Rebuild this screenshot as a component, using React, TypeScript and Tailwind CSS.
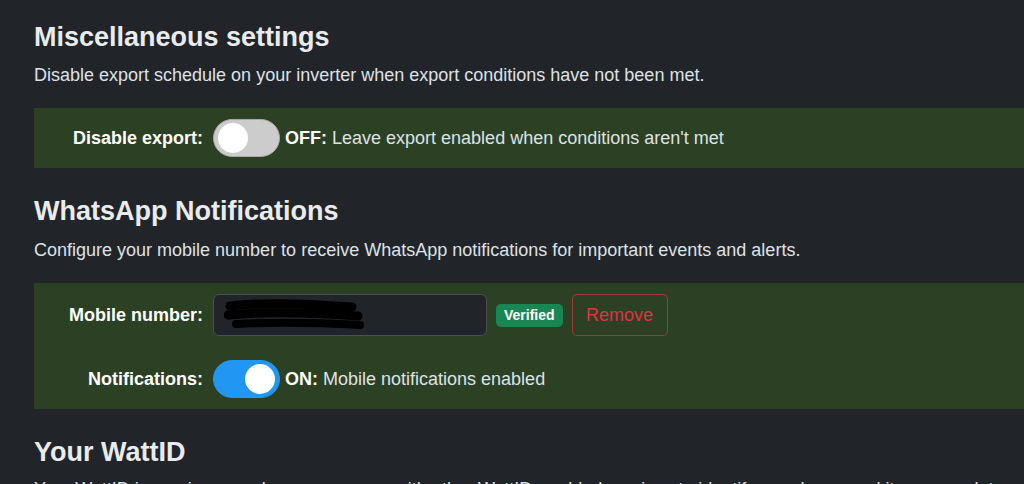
import React from 'react';

const Toggle = ({ on }: { on: boolean }) => (
  <span
    className={`relative inline-flex h-[38px] w-[67px] shrink-0 items-center rounded-full border ${
      on ? 'bg-[#2196f3] border-[#2196f3] justify-end' : 'bg-[#cccccc] border-[#a9a9a9] justify-start'
    } px-[4px]`}
  >
    <span className="block h-[30px] w-[30px] rounded-full bg-white" />
  </span>
);

const Label = ({ children }: { children: React.ReactNode }) => (
  <div className="w-[169px] shrink-0 text-right text-[18px] font-bold text-white">{children}</div>
);

export default function App() {
  return (
    <div className="min-h-screen overflow-hidden bg-[#212529] pl-[34px] pt-[22px] font-['Liberation_Sans',Arial,sans-serif] text-[#dee2e6]">
      {/* Misc */}
      <h3 className="text-[27px] font-bold leading-[31px] text-[#e9ecef]">Miscellaneous settings</h3>
      <p className="mt-[9px] text-[18px] leading-[27px]">
        Disable export schedule on your inverter when export conditions have not been met.
      </p>
      <div className="mt-[19px] flex h-[60px] items-center bg-[#2c4024]">
        <Label>Disable export:</Label>
        <div className="ml-[10px] flex items-center gap-[5px] text-[18px]">
          <Toggle on={false} />
          <span>
            <b className="text-white">OFF:</b> Leave export enabled when conditions aren't met
          </span>
        </div>
      </div>

      {/* WhatsApp */}
      <h3 className="mt-[28px] text-[27px] font-bold leading-[31px] text-[#e9ecef]">WhatsApp Notifications</h3>
      <p className="mt-[10px] text-[18px] leading-[27px]">
        Configure your mobile number to receive WhatsApp notifications for important events and alerts.
      </p>
      <div className="mt-[19px] flex flex-col gap-[24px] bg-[#2c4024] py-[11px]">
        <div className="flex items-center">
          <Label>Mobile number:</Label>
          <div className="ml-[10px] flex h-[42px] w-[274px] items-center rounded-[6px] border border-[#495057] bg-[#212529] px-[10px]">
            <svg width="140" height="34" viewBox="0 0 140 34">
              <path d="M6 8 C40 4, 90 6, 128 9" stroke="#000" strokeWidth="9" strokeLinecap="round" fill="none" />
              <path d="M4 17 C45 13, 95 15, 134 18" stroke="#000" strokeWidth="9" strokeLinecap="round" fill="none" />
              <path d="M12 26 C50 24, 100 25, 136 27" stroke="#000" strokeWidth="8" strokeLinecap="round" fill="none" />
            </svg>
          </div>
          <span className="ml-[9px] rounded-[5px] bg-[#198754] px-[8px] py-[3px] text-[14px] font-bold leading-[17px] text-white">
            Verified
          </span>
          <button className="ml-[9px] h-[42px] w-[96px] rounded-[5px] border border-[#9e3a3a] text-[18px] text-[#dc3545]">
            Remove
          </button>
        </div>
        <div className="flex items-center">
          <Label>Notifications:</Label>
          <div className="ml-[10px] flex items-center gap-[5px] text-[18px]">
            <Toggle on={true} />
            <span>
              <b className="text-white">ON:</b> Mobile notifications enabled
            </span>
          </div>
        </div>
      </div>

      {/* WattID */}
      <h3 className="mt-[28px] text-[27px] font-bold leading-[31px] text-[#e9ecef]">Your WattID</h3>
      <p className="mt-[8px] text-[18px] leading-[27px]">
        Your WattID is a unique number you can use with other WattID-enabled services to identify your home and its energy data.
      </p>
    </div>
  );
}
